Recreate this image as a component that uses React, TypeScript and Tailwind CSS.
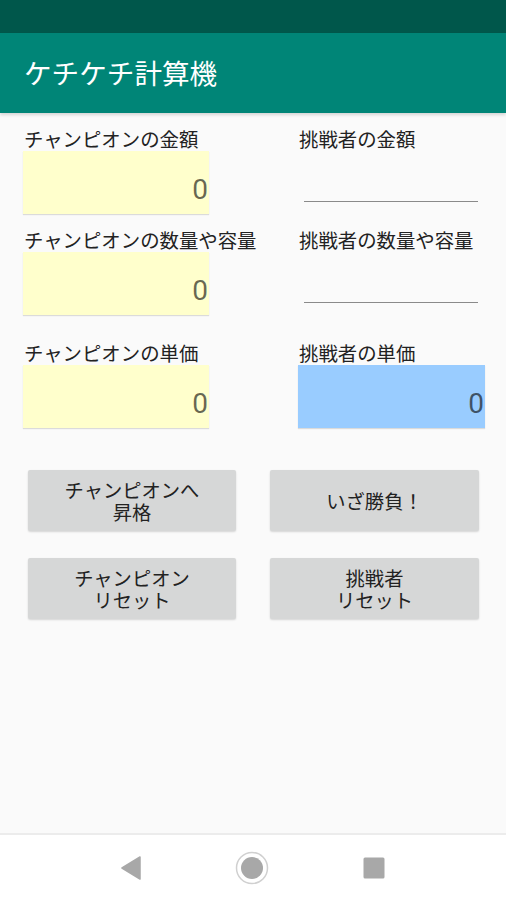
import React from "react";

const jp = { fontFamily: '"Noto Sans CJK JP", "Noto Sans", sans-serif' };

function NumBox({ color }: { color: string }) {
  return (
    <div
      className={`flex h-[63px] items-end justify-end pb-[10px] pr-[1px] text-[28px] leading-none text-black/60 shadow-[0_1px_1px_rgba(0,0,0,0.12)] ${color}`}
      style={{ fontFamily: "Roboto, sans-serif" }}
    >
      0
    </div>
  );
}

function Underline() {
  return (
    <div className="flex h-[63px] items-end pb-[12px] pl-[6px] pr-[7px]">
      <div className="h-[1.5px] w-full bg-[#8a8a8a]" />
    </div>
  );
}

function Label({ children }: { children: React.ReactNode }) {
  return (
    <div className="h-[24px] whitespace-nowrap pl-[1px] text-[19.4px] leading-[24px] text-[#222]">
      {children}
    </div>
  );
}

function Btn({ lines }: { lines: string[] }) {
  return (
    <button className="flex h-[61px] flex-col items-center justify-center rounded-[2px] bg-[#d6d7d7] text-[19.3px] leading-[22px] text-[#222] shadow-[0_1px_2px_rgba(0,0,0,0.15)]">
      {lines.map((l) => (
        <span key={l}>{l}</span>
      ))}
    </button>
  );
}

export default function App() {
  return (
    <div className="flex h-[900px] w-[506px] flex-col bg-[#fafafa]" style={jp}>
      {/* status bar */}
      <div className="h-[33px] bg-[#00574b]" />

      {/* app bar */}
      <div className="flex h-[80px] items-center bg-[#008577] pl-[24px] shadow-[0_2px_3px_rgba(0,0,0,0.15)]">
        <h1 className="text-[27.6px] leading-none text-white">ケチケチ計算機</h1>
      </div>

      {/* fields */}
      <div className="grid grid-cols-[186px_187px] gap-x-[89px] pl-[23px] pt-[14px]">
        <div>
          <Label>チャンピオンの金額</Label>
          <NumBox color="bg-[#ffffcc]" />
        </div>
        <div>
          <Label>挑戦者の金額</Label>
          <Underline />
        </div>

        <div className="mt-[14px]">
          <Label>チャンピオンの数量や容量</Label>
          <NumBox color="bg-[#ffffcc]" />
        </div>
        <div className="mt-[14px]">
          <Label>挑戦者の数量や容量</Label>
          <Underline />
        </div>

        <div className="mt-[26px]">
          <Label>チャンピオンの単価</Label>
          <NumBox color="bg-[#ffffcc]" />
        </div>
        <div className="mt-[26px]">
          <Label>挑戦者の単価</Label>
          <NumBox color="bg-[#99ccff]" />
        </div>
      </div>

      {/* buttons */}
      <div className="grid grid-cols-[208px_209px] gap-x-[34px] gap-y-[27px] pl-[28px] pt-[42px]">
        <Btn lines={["チャンピオンへ", "昇格"]} />
        <Btn lines={["いざ勝負！"]} />
        <Btn lines={["チャンピオン", "リセット"]} />
        <Btn lines={["挑戦者", "リセット"]} />
      </div>

      <div className="flex-1" />

      {/* nav bar */}
      <div className="flex h-[67px] items-center justify-center border-t-[2px] border-[#ececec] bg-white">
        <div className="flex w-[264px] items-center justify-between">
          <svg width="20" height="24" viewBox="0 0 20 24">
            <path d="M19 1 L1 12 L19 23 Z" fill="#a8a8a8" stroke="#a8a8a8" strokeWidth="1.5" strokeLinejoin="round" />
          </svg>
          <svg width="34" height="34" viewBox="0 0 34 34">
            <circle cx="17" cy="17" r="15.5" fill="none" stroke="#d0d0d0" strokeWidth="1.5" />
            <circle cx="17" cy="17" r="11" fill="#a8a8a8" />
          </svg>
          <svg width="22" height="22" viewBox="0 0 22 22">
            <rect x="0.5" y="0.5" width="21" height="21" rx="1.5" fill="#a8a8a8" />
          </svg>
        </div>
      </div>
    </div>
  );
}
